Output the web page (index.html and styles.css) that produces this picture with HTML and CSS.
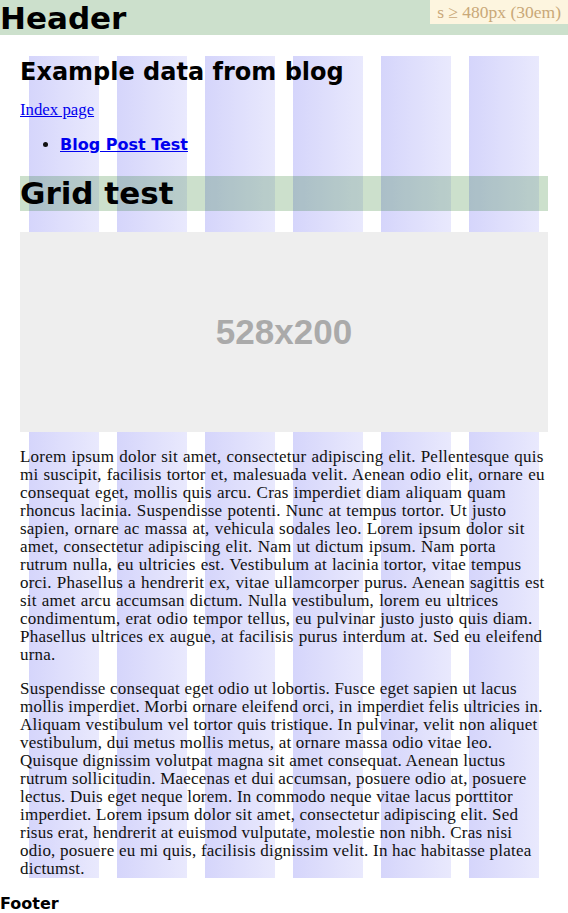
FILE: index.html
```html
<!DOCTYPE html>
<html>
<head>
<meta charset="utf-8">
<link rel="stylesheet" href="styles.css">
</head>
<body>
<header class="site-header">
  <h1 class="site-title">Header</h1>
  <div class="breakpoint">s ≥ 480px (30em)</div>
</header>
<main class="container">
  <h2 class="page-title">Example data from blog</h2>
  <p class="index-link"><a href="#">Index page</a></p>
  <ul class="post-list">
    <li><a href="#">Blog Post Test</a></li>
  </ul>
  <h1 class="grid-title">Grid test</h1>
  <div class="placeholder">528x200</div>
  <p class="copy copy-lead">Lorem ipsum dolor sit amet, consectetur adipiscing elit. Pellentesque quis mi suscipit, facilisis tortor et, malesuada velit. Aenean odio elit, ornare eu consequat eget, mollis quis arcu. Cras imperdiet diam aliquam quam rhoncus lacinia. Suspendisse potenti. Nunc at tempus tortor. Ut justo sapien, ornare ac massa at, vehicula sodales leo. Lorem ipsum dolor sit amet, consectetur adipiscing elit. Nam ut dictum ipsum. Nam porta rutrum nulla, eu ultricies est. Vestibulum at lacinia tortor, vitae tempus orci. Phasellus a hendrerit ex, vitae ullamcorper purus. Aenean sagittis est sit amet arcu accumsan dictum. Nulla vestibulum, lorem eu ultrices condimentum, erat odio tempor tellus, eu pulvinar justo justo quis diam. Phasellus ultrices ex augue, at facilisis purus interdum at. Sed eu eleifend urna.</p>
  <p class="copy">Suspendisse consequat eget odio ut lobortis. Fusce eget sapien ut lacus mollis imperdiet. Morbi ornare eleifend orci, in imperdiet felis ultricies in. Aliquam vestibulum vel tortor quis tristique. In pulvinar, velit non aliquet vestibulum, dui metus mollis metus, at ornare massa odio vitae leo. Quisque dignissim volutpat magna sit amet consequat. Aenean luctus rutrum sollicitudin. Maecenas et dui accumsan, posuere odio at, posuere lectus. Duis eget neque lorem. In commodo neque vitae lacus porttitor imperdiet. Lorem ipsum dolor sit amet, consectetur adipiscing elit. Sed risus erat, hendrerit at euismod vulputate, molestie non nibh. Cras nisi odio, posuere eu mi quis, facilisis dignissim velit. In hac habitasse platea dictumst.</p>
</main>
<footer class="site-footer">Footer</footer>
</body>
</html>
```

FILE: styles.css
```css
html, body {
  margin: 0;
  padding: 0;
  background: #fff;
}
body {
  font-family: "Liberation Serif", serif;
  font-size: 17px;
  line-height: 18px;
  color: #111;
}
.site-header {
  position: relative;
  height: 35px;
  background: rgba(0, 100, 0, 0.2);
}
.site-title {
  margin: 0;
  padding-top: 1px;
  font-family: "DejaVu Sans", sans-serif;
  font-weight: bold;
  font-size: 31px;
  line-height: 34px;
  color: #000;
}
.breakpoint {
  position: absolute;
  top: 0;
  right: 0;
  height: 24px;
  padding: 0 7px;
  background: #fdf5df;
  color: #c9a878;
  font-family: "Liberation Serif", serif;
  font-size: 17.5px;
  line-height: 24px;
}
.container {
  margin: 21px 20px 0;
  padding-top: 2px;
  background-image: linear-gradient(to right, transparent 9px, #d5d5fb 9px, #e9e9fd 79px, transparent 79px);
  background-size: 88px 100%;
  background-repeat: repeat-x;
  display: flow-root;
}
.page-title {
  margin: 0;
  font-family: "DejaVu Sans", sans-serif;
  font-weight: bold;
  font-size: 24px;
  line-height: 28px;
  color: #000;
}
.index-link {
  margin: 15px 0 0;
  font-size: 16.8px;
}
a {
  color: #0000ee;
}
.post-list {
  margin: 16px 0 0;
  padding-left: 40px;
  font-family: "DejaVu Sans", sans-serif;
  font-weight: bold;
  font-size: 16px;
  line-height: 19px;
}
.grid-title {
  margin: 22px 0 0;
  font-family: "DejaVu Sans", sans-serif;
  font-weight: bold;
  font-size: 31px;
  line-height: 35px;
  background: rgba(0, 100, 0, 0.2);
  color: #000;
}
.placeholder {
  margin-top: 21px;
  height: 200px;
  background: #eeeeee;
  color: #aaaaaa;
  font-family: "Liberation Sans", sans-serif;
  font-weight: bold;
  font-size: 35px;
  display: flex;
  align-items: center;
  justify-content: center;
}
.copy {
  margin: 16px 0 0;
  letter-spacing: 0.22px;
}
.copy-lead {
  word-spacing: 0.6px;
}
.site-footer {
  margin-top: 16px;
  font-family: "DejaVu Sans", sans-serif;
  font-weight: bold;
  font-size: 16px;
  line-height: 20px;
  color: #000;
}
```
